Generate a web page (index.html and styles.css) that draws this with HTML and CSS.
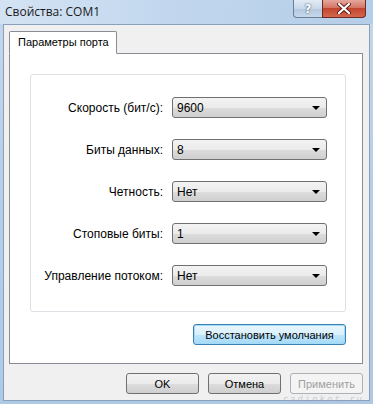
FILE: index.html
```html
<!DOCTYPE html>
<html lang="ru">
<head>
    <meta charset="UTF-8">
    <title>Свойства: COM1</title>
    <link rel="stylesheet" href="styles.css">
</head>
<body>
    <div class="window">
        <div class="titlebar">
            <span class="caption">Свойства: COM1</span>
            <div class="caption-buttons">
                <span class="cap-btn cap-help">?</span>
                <span class="cap-btn cap-close">
                    <svg width="14" height="11" viewBox="0 0 14 11">
                        <path d="M2 1 L12 10 M12 1 L2 10" stroke="#5b1a14" stroke-width="4" stroke-linecap="round"/>
                        <path d="M2 1 L12 10 M12 1 L2 10" stroke="#ffffff" stroke-width="2.2" stroke-linecap="round"/>
                    </svg>
                </span>
            </div>
        </div>

        <div class="client">
            <div class="tabs">
                <div class="tab active">Параметры порта</div>
            </div>

            <div class="tab-page">
                <div class="group">
                    <div class="fields">
                        <label>Скорость (бит/с):</label>
                        <div class="combo"><span>9600</span><i class="arrow"></i></div>

                        <label>Биты данных:</label>
                        <div class="combo"><span>8</span><i class="arrow"></i></div>

                        <label>Четность:</label>
                        <div class="combo"><span>Нет</span><i class="arrow"></i></div>

                        <label>Стоповые биты:</label>
                        <div class="combo"><span>1</span><i class="arrow"></i></div>

                        <label>Управление потоком:</label>
                        <div class="combo"><span>Нет</span><i class="arrow"></i></div>
                    </div>
                </div>

                <div class="restore-row">
                    <button class="btn btn-focus">Восстановить умолчания</button>
                </div>
            </div>

            <div class="dialog-buttons">
                <button class="btn">OK</button>
                <button class="btn">Отмена</button>
                <button class="btn" disabled>Применить</button>
            </div>
        </div>

        <div class="watermark">radiokot.ru</div>
    </div>
</body>
</html>
```

FILE: styles.css
```css
body {
    margin: 0;
    width: 373px;
    height: 404px;
    overflow: hidden;
    font-family: 'Liberation Sans', Arial, sans-serif;
    font-size: 12px;
    color: #000;
}
.window {
    position: relative;
    width: 373px;
    height: 404px;
    box-sizing: border-box;
    padding: 0 3px 3px 3px;
    display: flex;
    flex-direction: column;
    background: linear-gradient(to bottom, #c3d8ee 0%, #b7cfe8 40%, #aec9e6 100%);
}
.titlebar {
    height: 24px;
    display: flex;
    align-items: flex-start;
    justify-content: space-between;
    background: linear-gradient(100deg, #d4e3f3 0%, #c2d7ee 45%, #b4cde8 100%);
    margin: 0 -3px;
    padding: 0 7px 0 5px;
}
.caption {
    font-family: 'Open Sans', 'Noto Sans', sans-serif;
    font-size: 12px;
    line-height: 24px;
    color: #1a1a1a;
}
.caption-buttons {
    display: flex;
}
.cap-btn {
    height: 18px;
    display: flex;
    align-items: center;
    justify-content: center;
    border: 1px solid #6b7f99;
    border-top: none;
    box-sizing: border-box;
}
.cap-help {
    width: 29px;
    border-radius: 0 0 0 4px;
    border-right: none;
    background: linear-gradient(to bottom, #e2ebf5 0%, #c9d9ea 50%, #b3c8df 51%, #c7d8ea 100%);
    color: #ffffff;
    font-family: 'DejaVu Sans', sans-serif;
    font-weight: bold;
    font-size: 12px;
    text-shadow: 0 0 2px #4a5d75, 0 0 1px #4a5d75;
}
.cap-close {
    width: 44px;
    border-radius: 0 0 4px 0;
    border-color: #6e2b23;
    background: linear-gradient(to bottom, #e4a89d 0%, #d37664 45%, #c3452f 50%, #d2674d 100%);
}
.client {
    flex: 1;
    background-color: #f0f0f0;
    border: 1px solid #8aa0ba;
    padding: 6px 6px 0 5px;
    display: flex;
    flex-direction: column;
}
.tabs {
    display: flex;
    height: 22px;
}
.tab {
    position: relative;
    z-index: 1;
    padding: 0 7px 0 8px;
    line-height: 20px;
    font-size: 11px;
    background-color: #fff;
    border: 1px solid #898c95;
    border-bottom: 1px solid #fff;
    border-radius: 2px 2px 0 0;
    margin-bottom: -1px;
    box-sizing: border-box;
    height: 23px;
}
.tab-page {
    height: 311px;
    box-sizing: border-box;
    background-color: #fff;
    border: 1px solid #898c95;
    padding: 20px 16px 0 20px;
}
.group {
    border: 1px solid #dcdfe3;
    border-radius: 3px;
    padding: 22px 18px 25px 8px;
}
.fields {
    display: grid;
    grid-template-columns: 1fr 155px;
    column-gap: 9px;
    row-gap: 21px;
    align-items: center;
}
.fields label {
    text-align: right;
    white-space: nowrap;
}
.combo {
    height: 21px;
    box-sizing: border-box;
    border: 1px solid #707070;
    border-radius: 3px;
    background: linear-gradient(to bottom, #f3f3f3 0%, #ebebeb 50%, #dddddd 51%, #cfcfcf 100%);
    display: flex;
    align-items: center;
    justify-content: space-between;
    padding: 0 6px 0 4px;
}
.arrow {
    width: 0;
    height: 0;
    border-left: 4px solid transparent;
    border-right: 4px solid transparent;
    border-top: 4px solid #000;
}
.restore-row {
    display: flex;
    justify-content: flex-end;
    margin-top: 12px;
}
.btn {
    font-family: 'Liberation Sans', Arial, sans-serif;
    font-size: 11px;
    color: #000;
    height: 21px;
    padding: 0;
    border: 1px solid #707070;
    border-radius: 3px;
    background: linear-gradient(to bottom, #f2f2f2 0%, #ebebeb 50%, #dddddd 51%, #cfcfcf 100%);
}
.btn-focus {
    width: 153px;
    border-color: #3c7fb1;
    box-shadow: inset 0 0 0 1px #9fdcf9;
    background: linear-gradient(to bottom, #eaf6fd 0%, #d9f0fc 50%, #bee6fd 51%, #a7d9f5 100%);
}
.btn:disabled {
    color: #a0a0a0;
    border-color: #adb2b5;
    background: #f4f4f4;
}
.dialog-buttons {
    display: flex;
    justify-content: flex-end;
    gap: 9px;
    margin-top: 9px;
}
.dialog-buttons .btn {
    width: 73px;
}
.watermark {
    position: absolute;
    right: 9px;
    bottom: 0;
    font-family: 'DejaVu Sans Mono', monospace;
    font-style: italic;
    font-size: 9px;
    line-height: 10px;
    letter-spacing: 2px;
    color: rgba(170, 180, 200, 0.6);
}
```
